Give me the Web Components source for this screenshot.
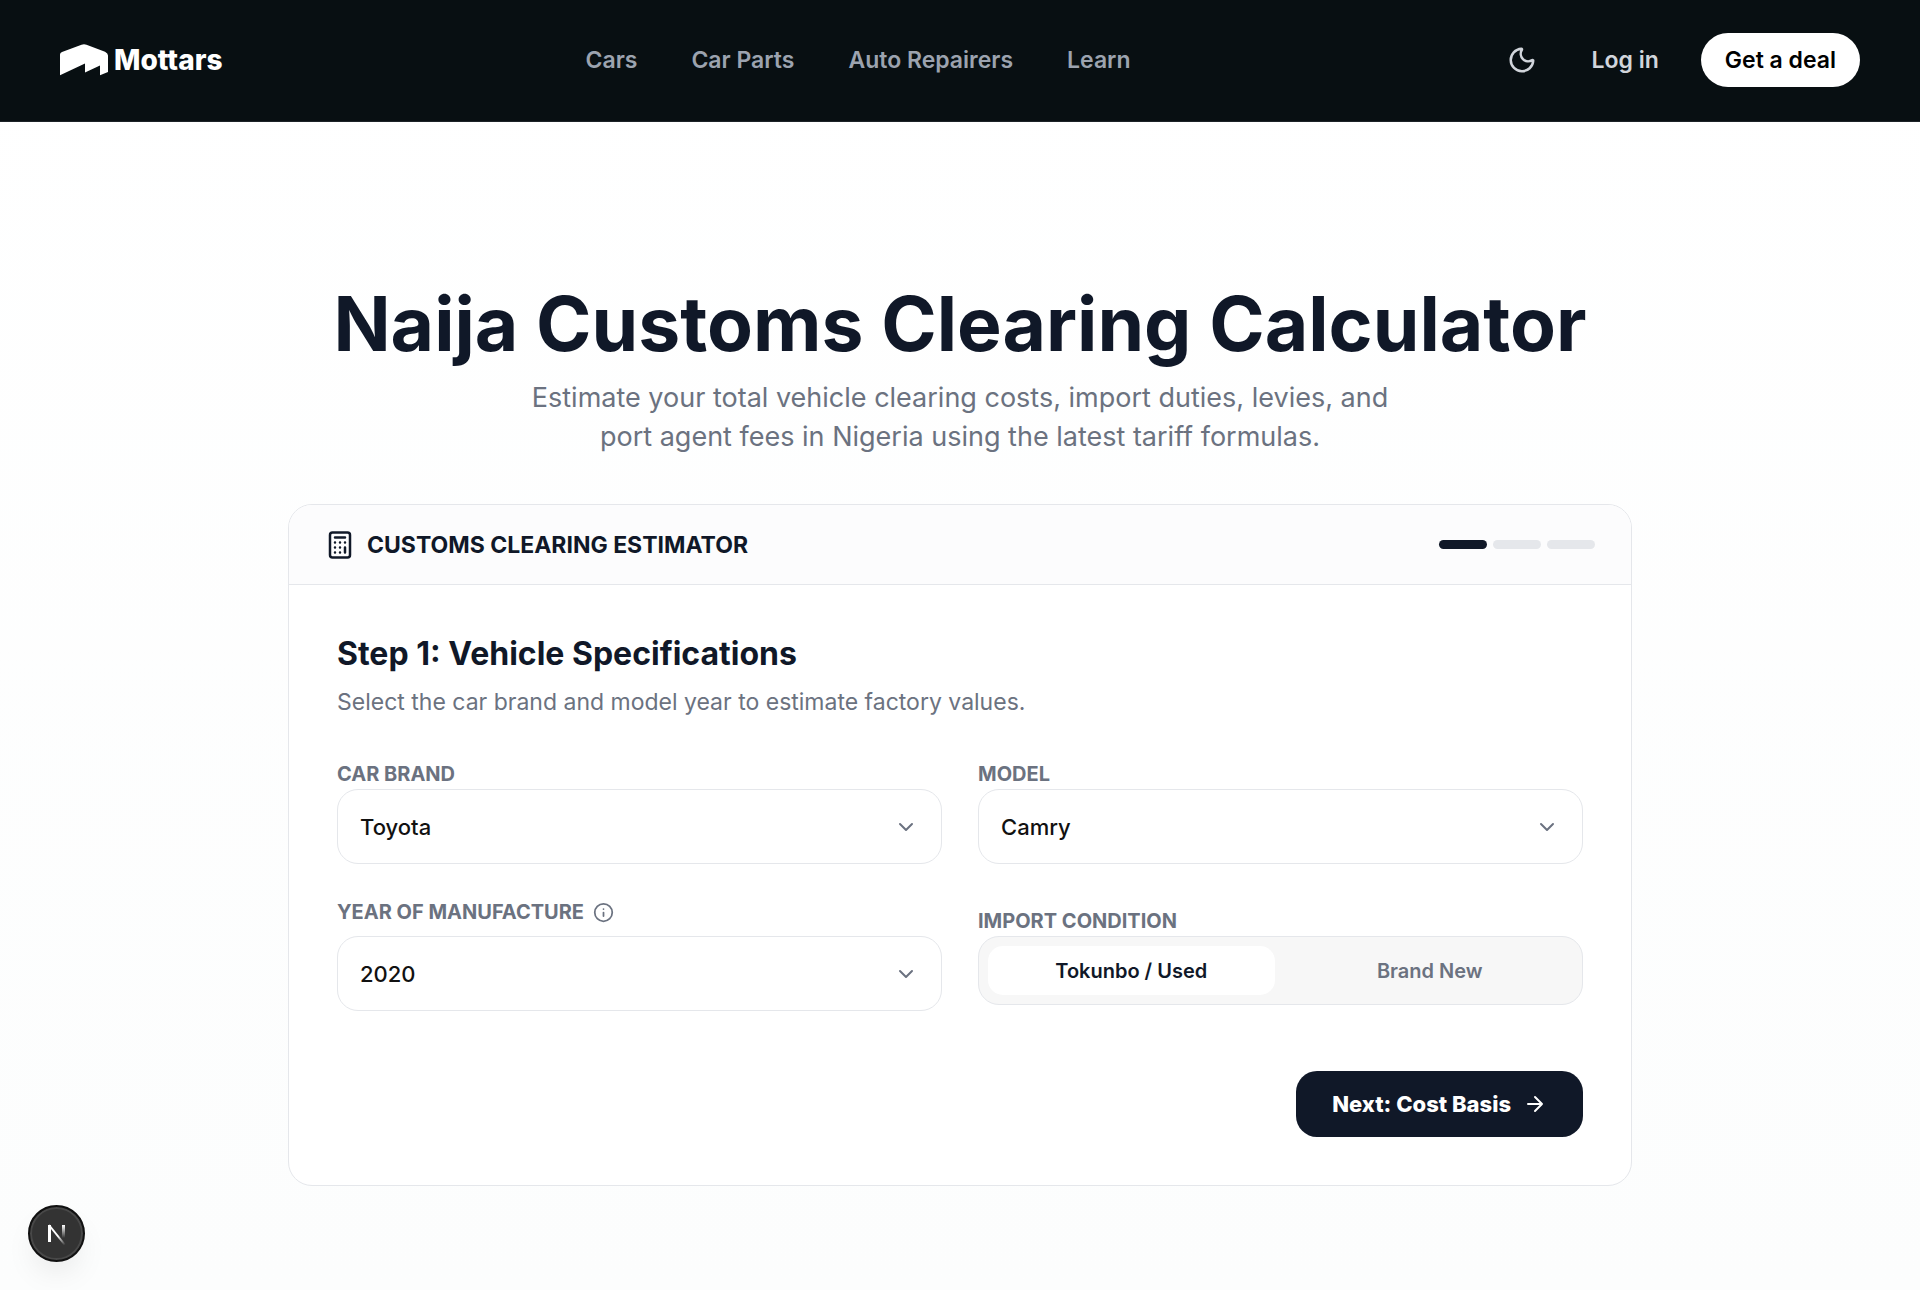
<!DOCTYPE html>
<html lang="en">
<head>
<meta charset="utf-8">
<meta name="viewport" content="width=device-width, initial-scale=1">
<title>Naija Customs Clearing Calculator | Mottars</title>
<style>
  :root {
    --ink: #101828;
    --muted: #6b7280;
    --rule: #e5e7eb;
    --night: #080f12;
    --t-sm: 20px;
    --t-control: 22px;
    --t-md: 23px;
    --t-lg: 32px;
  }
  body {
    margin: 0;
    min-height: 100vh;
    font-family: Inter, "Liberation Sans", sans-serif;
    font-size: var(--t-md);
    color: var(--ink);
    background: linear-gradient(#ffffff, #fcfdfd);
  }
</style>
</head>
<body>
<site-header>
  <nav-link slot="nav" href="#cars">Cars</nav-link>
  <nav-link slot="nav" href="#parts">Car Parts</nav-link>
  <nav-link slot="nav" href="#repairers">Auto Repairers</nav-link>
  <nav-link slot="nav" href="#learn">Learn</nav-link>
</site-header>

<page-hero>
  <span slot="title">Naija Customs Clearing Calculator</span>
  <span slot="lead">Estimate your total vehicle clearing costs, import duties, levies, and port agent fees in Nigeria using the latest tariff formulas.</span>
  <estimator-card step="1" steps="3">
    <span slot="name">CUSTOMS CLEARING ESTIMATOR</span>
    <span slot="title">Step 1: Vehicle Specifications</span>
    <span slot="hint">Select the car brand and model year to estimate factory values.</span>
    <select-field label="CAR BRAND" options="Toyota,Honda,Lexus,Mercedes-Benz"></select-field>
    <select-field label="MODEL" options="Camry,Corolla,Highlander,RAV4"></select-field>
    <select-field label="YEAR OF MANUFACTURE" options="2020,2019,2018,2017" info></select-field>
    <segment-field label="IMPORT CONDITION" options="Tokunbo / Used,Brand New"></segment-field>
    <next-button slot="action">Next: Cost Basis</next-button>
  </estimator-card>
</page-hero>

<dev-badge></dev-badge>

<script>
// ── shared ──────────────────────────────────────────────────────────
const ICONS = {
  moon: '<path d="M20.985 12.486a9 9 0 1 1-9.473-9.472c.405-.022.617.46.402.803a6 6 0 0 0 8.268 8.268c.344-.215.825-.004.803.401"/>',
  calculator: '<rect x="4" y="2" width="16" height="20" rx="2"/><path d="M8 6h8M16 14v4M16 10h.01M12 10h.01M8 10h.01M12 14h.01M8 14h.01M12 18h.01M8 18h.01"/>',
  chevron: '<path d="m6 9 6 6 6-6"/>',
  arrow: '<path d="M5 12h14M12 5l7 7-7 7"/>',
  info: '<circle cx="12" cy="12" r="10"/><path d="M12 16v-4M12 8h.01"/>',
};

const icon = (name, size, stroke = 2) => `
  <svg class="icon" width="${size}" height="${size}" viewBox="0 0 24 24" fill="none" stroke="currentColor"
    stroke-width="${stroke}" stroke-linecap="round" stroke-linejoin="round" aria-hidden="true">${ICONS[name]}</svg>`;

const BASE = `
  *, *::before, *::after { box-sizing: border-box; }
  button, select, input { font: inherit; color: inherit; margin: 0; }
  svg { display: block; flex: none; }
`;

class BaseElement extends HTMLElement {
  constructor() {
    super();
    this.attachShadow({ mode: 'open' });
  }
  connectedCallback() {
    this.shadowRoot.innerHTML = `<style>${BASE}${this.styles()}</style>${this.markup()}`;
  }
  list(name) {
    return (this.getAttribute(name) || '').split(',').map((s) => s.trim());
  }
}

// ── header ──────────────────────────────────────────────────────────
class SiteHeader extends BaseElement {
  styles() {
    return `
      :host { display: block; background: var(--night); color: #fff; border-bottom: 1px solid #1c2327; }
      header {
        display: flex; align-items: center; justify-content: space-between;
        padding: 33px 60px 34px;
      }
      .brand {
        display: flex; align-items: center; gap: 6px;
        color: #fff; text-decoration: none;
        font-size: 28px; font-weight: 800; line-height: 36px;
      }
      nav { display: flex; gap: 54px; }
      .actions { display: flex; align-items: center; gap: 18px; }
      button { border: 0; background: none; cursor: pointer; }
      .theme { display: grid; place-items: center; width: 56px; height: 54px; padding: 0; color: #d1d5db; }
      .login { padding: 0 24px; color: #d1d5db; text-decoration: none; font-weight: 600; }
      .deal { height: 54px; padding: 0 24px; border-radius: 27px; background: #fff; color: #000; font-weight: 600; }
    `;
  }
  markup() {
    return `
      <header>
        <a class="brand" href="#home">
          <svg width="48" height="32" viewBox="0 0 48 32" fill="#fff" aria-hidden="true">
            <path d="M0 10.5Q0 8.800 2 8L21.500.7Q24 0 26.500.7L45 7.800Q48 9.200 48 11.500V28L40 31.300V21.600L25 28.500V19.500L0 31.300Z"/>
          </svg>
          <span>Mottars</span>
        </a>
        <nav><slot name="nav"></slot></nav>
        <div class="actions">
          <button class="theme" type="button" aria-label="Toggle theme">${icon('moon', 30)}</button>
          <a class="login" href="#login">Log in</a>
          <button class="deal" type="button">Get a deal</button>
        </div>
      </header>
    `;
  }
}

class NavLink extends BaseElement {
  styles() {
    return `
      :host { display: block; }
      a { color: #9ca3af; text-decoration: none; font-weight: 600; }
      a:hover { color: #fff; }
    `;
  }
  markup() {
    return `<a href="${this.getAttribute('href')}"><slot></slot></a>`;
  }
}

// ── hero ────────────────────────────────────────────────────────────
class PageHero extends BaseElement {
  styles() {
    return `
      :host { display: block; padding: 160px 36px 96px; }
      main { max-width: 1344px; margin: 0 auto; }
      h1 { margin: 0 0 12px; font-size: 75px; line-height: 84px; font-weight: 700; text-align: center; }
      p {
        max-width: 880px; margin: 0 auto 48px;
        font-size: 27px; line-height: 39px; text-align: center; color: var(--muted);
      }
    `;
  }
  markup() {
    return `
      <main>
        <h1><slot name="title"></slot></h1>
        <p><slot name="lead"></slot></p>
        <slot></slot>
      </main>
    `;
  }
}

// ── estimator card ──────────────────────────────────────────────────
class EstimatorCard extends BaseElement {
  styles() {
    return `
      :host { display: block; border: 1px solid var(--rule); border-radius: 24px; background: #fff; overflow: hidden; }
      .top {
        display: flex; align-items: center; justify-content: space-between;
        height: 80px; padding: 0 36px;
        background: #fcfcfd; border-bottom: 1px solid var(--rule);
      }
      .name { display: flex; align-items: center; gap: 12px; font-weight: 700; }
      .bars { display: flex; gap: 6px; }
      .bars i { width: 48px; height: 9px; border-radius: 5px; background: var(--rule); }
      .bars i.on { background: var(--ink); }
      form { padding: 48px; }
      h2 { margin: 0 0 9px; font-size: var(--t-lg); line-height: 42px; font-weight: 700; }
      p { margin: 0; line-height: 36px; color: var(--muted); }
      .grid { display: grid; grid-template-columns: 1fr 1fr; gap: 36px; align-items: center; margin: 39px 0 60px; }
      .foot { display: flex; justify-content: flex-end; }
    `;
  }
  markup() {
    const step = Number(this.getAttribute('step'));
    const steps = Number(this.getAttribute('steps'));
    const bars = Array.from({ length: steps }, (_, i) => `<i class="${i < step ? 'on' : ''}"></i>`).join('');
    return `
      <div class="top">
        <div class="name">${icon('calculator', 30)}<slot name="name"></slot></div>
        <div class="bars" role="img" aria-label="Step ${step} of ${steps}">${bars}</div>
      </div>
      <form>
        <h2><slot name="title"></slot></h2>
        <p><slot name="hint"></slot></p>
        <div class="grid"><slot></slot></div>
        <div class="foot"><slot name="action"></slot></div>
      </form>
    `;
  }
}

// ── fields ──────────────────────────────────────────────────────────
const LABEL = `
  :host { display: block; }
  .label {
    display: flex; align-items: center; gap: 9px;
    font-size: var(--t-sm); line-height: 30px; font-weight: 700; color: var(--muted);
  }
`;

class SelectField extends BaseElement {
  styles() {
    return `
      ${LABEL}
      :host([info]) .label { line-height: 24px; margin-bottom: 12px; }
      .box { display: grid; align-items: center; }
      .box > * { grid-area: 1 / 1; }
      .box .icon { justify-self: end; margin-right: 24px; color: var(--muted); pointer-events: none; }
      select {
        appearance: none; width: 100%; height: 75px; padding: 0 60px 0 22px;
        border: 1px solid var(--rule); border-radius: 21px; background: #fff;
        color: #111; font-size: var(--t-control); font-weight: 500;
      }
    `;
  }
  markup() {
    const opts = this.list('options').map((o) => `<option>${o}</option>`).join('');
    const info = this.hasAttribute('info') ? icon('info', 21) : '';
    return `
      <div class="label"><label for="field">${this.getAttribute('label')}</label>${info}</div>
      <div class="box"><select id="field">${opts}</select>${icon('chevron', 24)}</div>
    `;
  }
}

class SegmentField extends BaseElement {
  styles() {
    return `
      ${LABEL}
      fieldset { margin: 0; padding: 0; border: 0; min-width: 0; }
      legend { padding: 0; }
      .track {
        display: grid; grid-template-columns: 1fr 1fr; gap: 12px;
        height: 69px; padding: 9px;
        border: 1px solid var(--rule); border-radius: 21px; background: #f7f7f7;
      }
      .seg {
        display: grid; place-items: center; border-radius: 15px; cursor: pointer;
        font-size: var(--t-sm); font-weight: 600; color: var(--muted);
      }
      .seg > * { grid-area: 1 / 1; }
      .seg input { appearance: none; width: 100%; height: 100%; border-radius: inherit; cursor: inherit; }
      .seg:has(:checked) { background: #fff; color: var(--ink); }
    `;
  }
  markup() {
    const segs = this.list('options').map((o, i) => `
      <label class="seg"><input type="radio" name="seg" ${i === 0 ? 'checked' : ''}><span>${o}</span></label>`).join('');
    return `
      <fieldset>
        <legend class="label">${this.getAttribute('label')}</legend>
        <div class="track">${segs}</div>
      </fieldset>
    `;
  }
}

class NextButton extends BaseElement {
  styles() {
    return `
      :host { display: block; }
      button {
        display: flex; align-items: center; gap: 12px;
        height: 66px; padding: 0 36px; border: 0; border-radius: 21px;
        background: var(--ink); color: #fff; font-size: var(--t-control); font-weight: 800; cursor: pointer;
      }
    `;
  }
  markup() {
    return `<button type="button"><slot></slot>${icon('arrow', 24)}</button>`;
  }
}

// ── floating dev badge ──────────────────────────────────────────────
class DevBadge extends BaseElement {
  styles() {
    return `
      :host { position: fixed; left: 28px; bottom: 28px; }
      button {
        display: grid; place-items: center; width: 57px; height: 57px; padding: 0;
        border: 2px solid #111; border-radius: 50%; background: #333; cursor: pointer;
        box-shadow: inset 0 0 0 2px #484848, 0 16px 32px -8px rgba(0, 0, 0, .1);
      }
    `;
  }
  markup() {
    return `
      <button type="button" aria-label="Open dev tools">
        <svg width="20" height="22" viewBox="0 0 20 22" fill="none" stroke-width="2" aria-hidden="true">
          <defs>
            <linearGradient id="a" x1="0" y1="2" x2="0" y2="15" gradientUnits="userSpaceOnUse">
              <stop stop-color="#fff"/><stop offset="1" stop-color="#fff" stop-opacity="0"/>
            </linearGradient>
            <linearGradient id="b" x1="11" y1="13" x2="18" y2="22" gradientUnits="userSpaceOnUse">
              <stop stop-color="#fff"/><stop offset="1" stop-color="#fff" stop-opacity="0"/>
            </linearGradient>
          </defs>
          <path d="M2.500 19V2" stroke="#fff" stroke-width="3"/>
          <path d="M2 2 18 22" stroke="url(#b)"/>
          <path d="M16.500 2v13" stroke="url(#a)" stroke-width="3"/>
        </svg>
      </button>
    `;
  }
}

customElements.define('nav-link', NavLink);
customElements.define('site-header', SiteHeader);
customElements.define('select-field', SelectField);
customElements.define('segment-field', SegmentField);
customElements.define('next-button', NextButton);
customElements.define('estimator-card', EstimatorCard);
customElements.define('page-hero', PageHero);
customElements.define('dev-badge', DevBadge);
</script>
</body>
</html>
